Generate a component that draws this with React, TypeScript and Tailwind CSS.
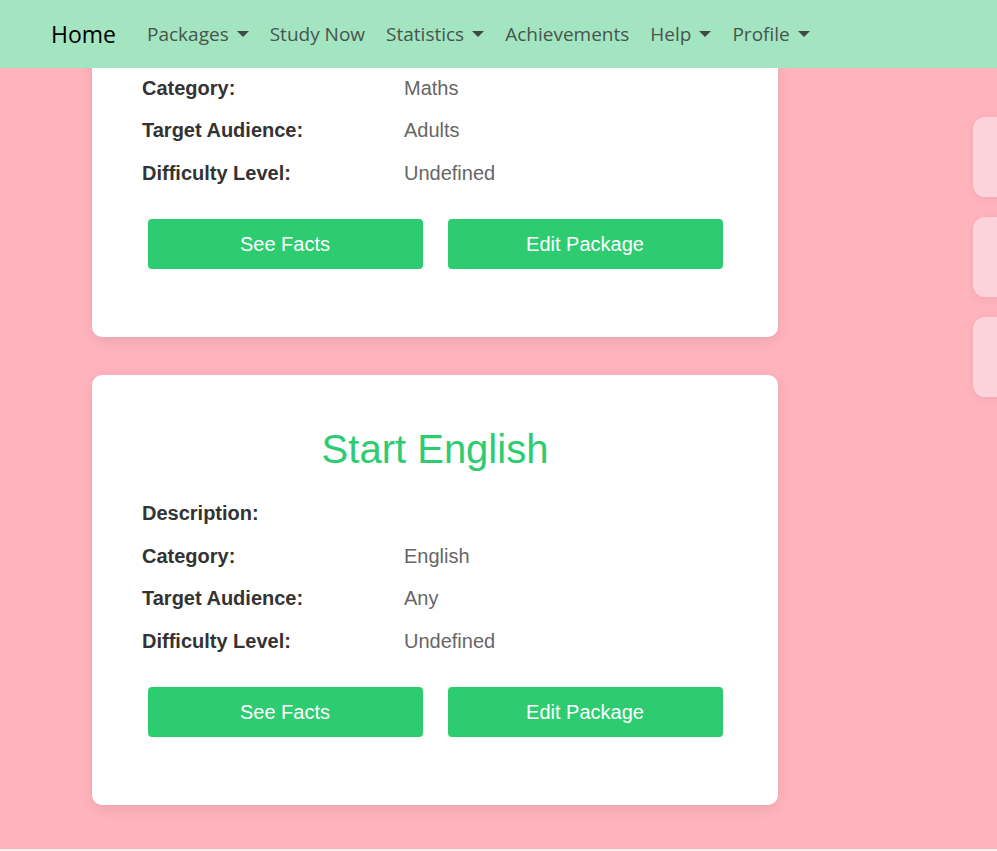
import React from 'react';

type Pkg = {
  title: string;
  description: string;
  category: string;
  audience: string;
  difficulty: string;
};

const PACKAGES: Pkg[] = [
  { title: 'Start Maths', description: '', category: 'Maths', audience: 'Adults', difficulty: 'Undefined' },
  { title: 'Start English', description: '', category: 'English', audience: 'Any', difficulty: 'Undefined' },
];

const NAV = [
  { label: 'Packages', dropdown: true },
  { label: 'Study Now', dropdown: false },
  { label: 'Statistics', dropdown: true },
  { label: 'Achievements', dropdown: false },
  { label: 'Help', dropdown: true },
  { label: 'Profile', dropdown: true },
];

const Caret = () => (
  <span className="ml-[8px] inline-block w-0 h-0 border-x-[6.5px] border-x-transparent border-t-[6.5px] border-t-[#3f4a44] align-middle" />
);

const Navbar = () => (
  <nav className="absolute top-0 left-0 right-0 z-10 h-[68px] bg-[#a3e4c1] flex items-center pl-[51px] font-['Open_Sans',sans-serif]">
    <a className="text-[23px] text-black mr-[31px] leading-none">Home</a>
    <ul className="flex items-center gap-[21px] text-[19px] text-[#46554d]">
      {NAV.map(item => (
        <li key={item.label} className="flex items-center leading-none">
          {item.label}
          {item.dropdown && <Caret />}
        </li>
      ))}
    </ul>
  </nav>
);

const Row = ({ label, value }: { label: string; value: string }) => (
  <div className="flex items-center h-[42.5px]">
    <span className="w-[262px] font-bold text-[#333]">{label}</span>
    <span className="text-[#666]">{value}</span>
  </div>
);

const PackageCard = ({ pkg }: { pkg: Pkg }) => (
  <div className="bg-white rounded-[10px] shadow-[0_4px_14px_rgba(0,0,0,0.08)] pt-[50px] pb-[68px] px-[50px] text-[20px]">
    <h2 className="text-center text-[40px] leading-[48px] text-[#2ecc71] mb-[19px]">{pkg.title}</h2>
    <Row label="Description:" value={pkg.description} />
    <Row label="Category:" value={pkg.category} />
    <Row label="Target Audience:" value={pkg.audience} />
    <Row label="Difficulty Level:" value={pkg.difficulty} />
    <div className="flex justify-center gap-[25px] mt-[25px]">
      <button className="w-[275px] h-[50px] rounded-[4px] bg-[#2ecc71] text-white text-[20px]">See Facts</button>
      <button className="w-[275px] h-[50px] rounded-[4px] bg-[#2ecc71] text-white text-[20px]">Edit Package</button>
    </div>
  </div>
);

const App: React.FC = () => {
  return (
    <div className="relative h-[851px] w-full overflow-hidden bg-[#f2f2f2] font-['Liberation_Sans',Arial,sans-serif]">
      <Navbar />

      {/* page content, scrolled down by 93px */}
      <div className="-mt-[93px] bg-[#ffb3bd] flex pb-[44px]">
        <div className="ml-[92px] w-[686px] shrink-0 flex flex-col gap-[38px]">
          {PACKAGES.map(p => (
            <PackageCard key={p.title} pkg={p} />
          ))}
        </div>

        {/* side panel, mostly off screen */}
        <div className="ml-[195px] mt-[210px] shrink-0 flex flex-col gap-[20px]">
          {[0, 1, 2].map(i => (
            <div key={i} className="w-[200px] h-[80px] rounded-[12px] bg-[#fcd3da] shadow-[0_2px_10px_rgba(0,0,0,0.06)]" />
          ))}
        </div>
      </div>
    </div>
  );
};

export default App;
